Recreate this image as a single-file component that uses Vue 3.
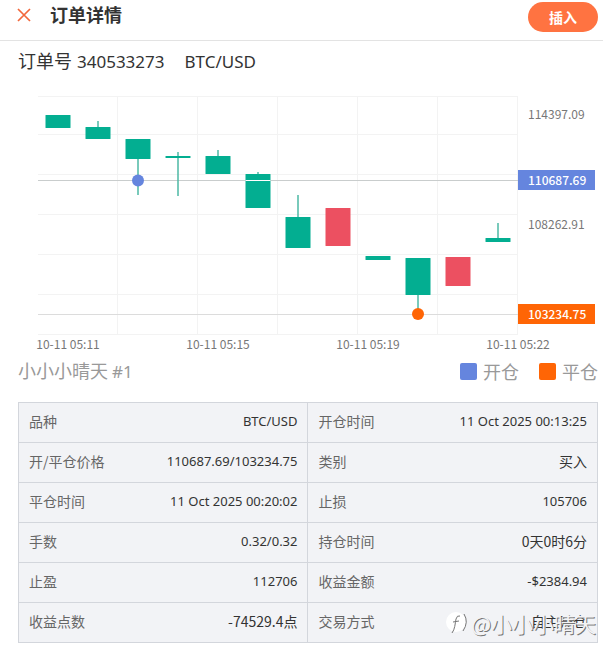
<script setup>
const gridX = [100, 180, 260, 340, 420, 500]
const gridY = [6, 44, 84, 124, 164, 204, 244]

const candles = [
  { top: 25, bottom: 38, high: 25, low: 38 },
  { top: 37, bottom: 49, high: 31, low: 49 },
  { top: 49, bottom: 69, high: 49, low: 105 },
  { top: 66, bottom: 68, high: 62, low: 106 },
  { top: 66, bottom: 84, high: 60, low: 84 },
  { top: 84, bottom: 118, high: 82, low: 118 },
  { top: 127, bottom: 158, high: 105, low: 158 },
  { top: 118, bottom: 156, high: 118, low: 156, up: true },
  { top: 166, bottom: 170, high: 166, low: 170 },
  { top: 168, bottom: 205, high: 168, low: 224 },
  { top: 167, bottom: 196, high: 167, low: 196, up: true },
  { top: 148, bottom: 152, high: 133, low: 152 },
].map((c, i) => ({ ...c, x: 40 + i * 40 }))

const openY = 91
const crossed = candles.filter((c) => c.top < openY && c.bottom > openY)

const times = [
  { x: 50, label: '10-11 05:11' },
  { x: 200, label: '10-11 05:15' },
  { x: 350, label: '10-11 05:19' },
  { x: 500, label: '10-11 05:22' },
]

const rows = [
  ['品种', 'BTC/USD', '开仓时间', '11 Oct 2025 00:13:25'],
  ['开/平仓价格', '110687.69/103234.75', '类别', '买入'],
  ['平仓时间', '11 Oct 2025 00:20:02', '止损', '105706'],
  ['手数', '0.32/0.32', '持仓时间', '0天0时6分'],
  ['止盈', '112706', '收益金额', '-$2384.94'],
  ['收益点数', '-74529.4点', '交易方式', '自主开仓'],
]

const isHan = (text) => /[\u4e00-\u9fff]/.test(text)
</script>

<template>
  <div class="page">
    <header class="bar">
      <button class="close" type="button" aria-label="关闭">
        <svg width="14" height="14" viewBox="0 0 14 14">
          <path d="M1 1L13 13M13 1L1 13" fill="none" stroke="#f2683c" stroke-width="1.7" />
        </svg>
      </button>
      <h1>订单详情</h1>
      <button class="insert" type="button">插入</button>
    </header>

    <main class="content">
      <h2 class="order">
        <span>订单号</span>
        <span class="latin">340533273</span>
        <span class="latin symbol">BTC/USD</span>
      </h2>

      <svg class="chart" viewBox="0 0 580 266">
        <g class="grid">
          <line v-for="y in gridY" :key="'h' + y" x1="20" x2="500" :y1="y + 0.5" :y2="y + 0.5" />
          <line v-for="x in gridX" :key="'v' + x" :x1="x - 0.5" :x2="x - 0.5" y1="6" y2="244" />
        </g>
        <line class="guide" x1="20" x2="500" y1="90.5" y2="90.5" />
        <line class="guide pale" x1="20" x2="500" y1="224.5" y2="224.5" />
        <g v-for="c in candles" :key="c.x" :class="c.up ? 'up' : 'down'">
          <line :x1="c.x" :x2="c.x" :y1="c.high" :y2="c.low" />
          <rect :x="c.x - 12.5" :y="c.top" width="25" :height="c.bottom - c.top" rx="0.5" />
        </g>
        <line
          v-for="c in crossed"
          :key="'c' + c.x"
          class="cut"
          :x1="c.x - 12.5"
          :x2="c.x + 12.5"
          y1="90.5"
          y2="90.5"
        />
        <circle cx="120" cy="90.5" r="6" fill="#6585de" />
        <circle cx="400" cy="224" r="6" fill="#ff6505" />

        <rect x="500" y="80" width="77" height="20" fill="#6585de" />
        <rect x="500" y="214" width="77" height="20" fill="#ff6505" />
        <g class="price">
          <text x="510" y="29">114397.09</text>
          <text class="tag" x="510" y="95">110687.69</text>
          <text x="510" y="139">108262.91</text>
          <text class="tag" x="510" y="229">103234.75</text>
        </g>
        <g class="time">
          <text v-for="t in times" :key="t.x" :x="t.x" y="259">{{ t.label }}</text>
        </g>
      </svg>

      <div class="legend">
        <span class="owner">小小小晴天 <span class="latin">#1</span></span>
        <span class="key"><i class="swatch open"></i>开仓</span>
        <span class="key"><i class="swatch shut"></i>平仓</span>
      </div>

      <div class="details">
        <table>
          <tbody>
            <tr v-for="r in rows" :key="r[0]">
              <th scope="row">{{ r[0] }}</th>
              <td :class="{ han: isHan(r[1]) }">{{ r[1] }}</td>
              <th scope="row">{{ r[2] }}</th>
              <td :class="{ han: isHan(r[3]) }">{{ r[3] }}</td>
            </tr>
          </tbody>
        </table>
        <div class="watermark">
          <svg width="22" height="24" viewBox="0 0 22 24">
            <circle cx="10" cy="11" r="10" fill="#fff" />
            <path d="M6 22C9 18 9 13 10 8Q11 4 14 5M7 11L13 10M18 3Q23 11 17 20" fill="none" stroke="#777" stroke-width="1" />
          </svg>
          <span>@小小小晴天</span>
        </div>
      </div>
    </main>
  </div>
</template>

<style>
body {
  background: #fff;
}
</style>

<style scoped>
.page {
  font-family: "Noto Sans CJK SC", sans-serif;
  color: #333;
}

.latin {
  font-family: "Noto Sans", "Noto Sans CJK SC", sans-serif;
  font-size: 17px;
}

.bar {
  display: flex;
  align-items: center;
  height: 40px;
  padding: 0 5px 0 17px;
  border-bottom: 1px solid #e3e3e3;
}

button {
  border: 0;
  padding: 0;
  font-family: inherit;
  cursor: pointer;
}

.close {
  display: flex;
  margin-bottom: 10px;
  background: none;
}

h1 {
  flex: 1;
  margin: 0 0 12px 19px;
  font-size: 18px;
  line-height: 24px;
  font-weight: 700;
}

.insert {
  width: 70px;
  height: 30px;
  margin-bottom: 6px;
  padding-bottom: 1px;
  border-radius: 15px;
  background: #ff7341;
  color: #fff;
  font-size: 14px;
  font-weight: 700;
}

.content {
  padding: 6px 5px 0 18px;
}

.order {
  display: flex;
  align-items: baseline;
  gap: 5px;
  margin: 0;
  height: 43px;
  font-size: 18px;
  line-height: 26px;
  font-weight: 400;
}

.symbol {
  margin-left: 15px;
}

.chart {
  display: block;
  width: 100%;
}

.grid line {
  stroke: #f3f3f3;
}

.guide {
  stroke: #c9cdcd;
}

.guide.pale {
  stroke: #dcdcdc;
}

.cut {
  stroke: #fff;
}

.down rect {
  fill: #03ae91;
}

.down line {
  stroke: #4db9a5;
  stroke-width: 1.5;
}

.up rect {
  fill: #ec5061;
}

.up line {
  stroke: #ec5061;
}

.price,
.time {
  font-size: 12px;
  fill: #777;
}

.time {
  text-anchor: middle;
}

.tag {
  fill: #fff;
  font-weight: 500;
}

.legend {
  display: flex;
  align-items: center;
  gap: 20px;
  height: 30px;
  margin-bottom: 16px;
  color: #999;
  font-size: 18px;
  line-height: 30px;
}

.owner {
  flex: 1;
}

.key {
  display: flex;
  align-items: center;
  gap: 6px;
}

.swatch {
  width: 17px;
  height: 17px;
  border-radius: 2px;
}

.open {
  background: #6585de;
}

.shut {
  background: #ff6505;
}

.details {
  position: relative;
}

table {
  width: 100%;
  table-layout: fixed;
  border-collapse: collapse;
  border: 1px solid #d3d6dc;
  background: #f2f3f6;
}

tr {
  height: 40px;
  border-bottom: 1px solid #d3d6dc;
}

th,
td {
  box-sizing: border-box;
  padding: 0 10px 3px;
  line-height: 20px;
  white-space: nowrap;
}

th {
  width: 18%;
  text-align: left;
  font-size: 14px;
  font-weight: 400;
  color: #666;
}

td {
  width: 32%;
  text-align: right;
  font-family: "Noto Sans", "Noto Sans CJK SC", sans-serif;
  font-size: 13px;
}

td.han {
  font-family: "Noto Sans CJK SC", sans-serif;
  font-size: 14px;
}

td:nth-child(2) {
  border-right: 1px solid #d3d6dc;
}

.watermark {
  position: absolute;
  right: 2px;
  bottom: 5px;
  display: flex;
  align-items: center;
  gap: 3px;
  color: #f3f3f5;
  font-size: 21px;
  line-height: 30px;
  white-space: nowrap;
  text-shadow: 1px 1px 0 #777;
  pointer-events: none;
}
</style>
